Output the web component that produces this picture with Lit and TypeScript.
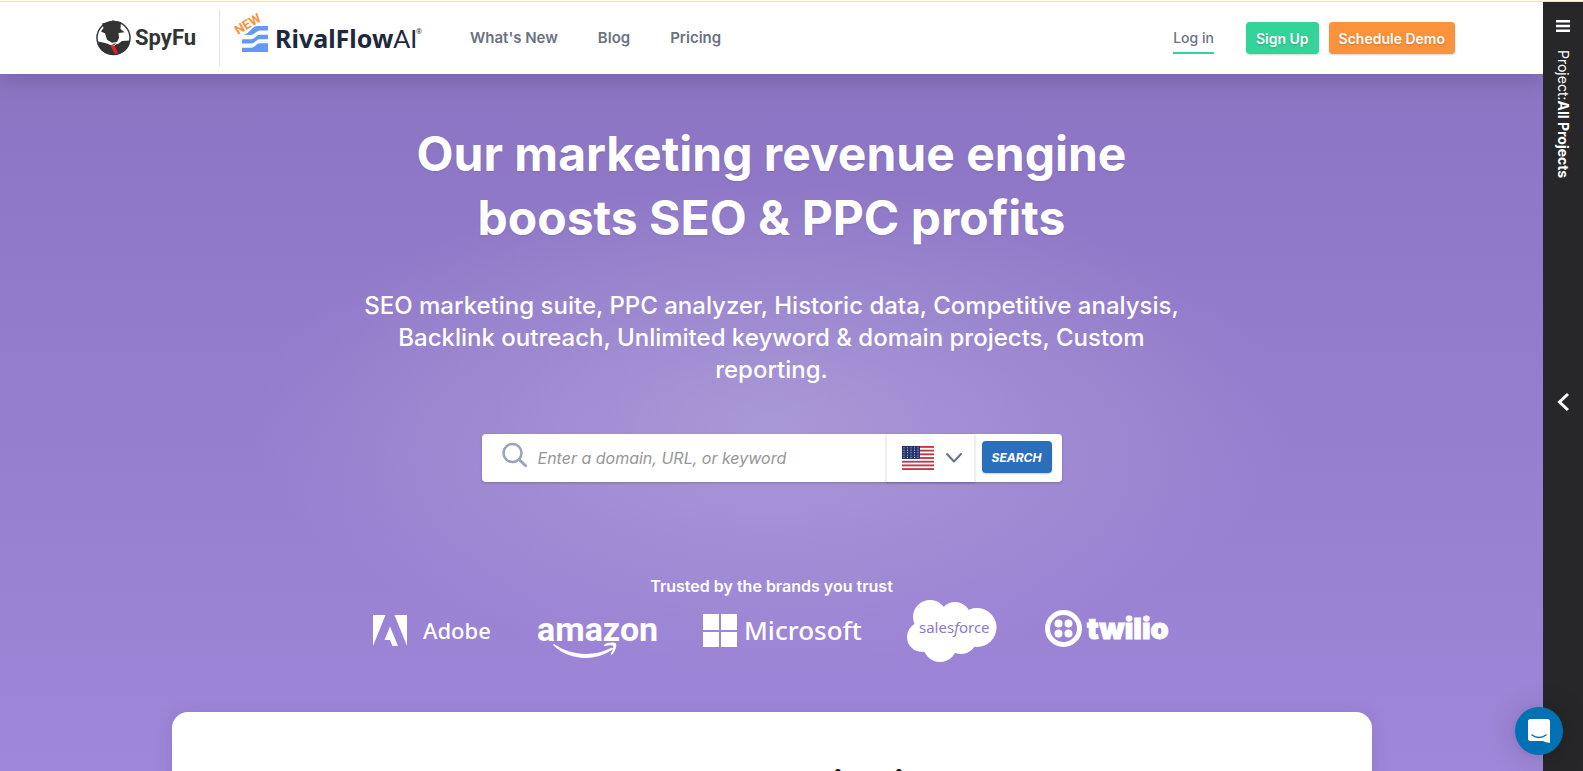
import { LitElement, html, css, svg } from "lit";
import { customElement } from "lit/decorators.js";

@customElement("spyfu-logo")
class SpyfuLogo extends LitElement {
  static styles = css`
    :host { display: block; }
    svg { display: block; }
    text { font: 700 22px Roboto, sans-serif; fill: #333; }
  `;
  render() {
    return html`<svg width="100" height="38" viewBox="0 0 100 38" role="img" aria-label="SpyFu">
      <circle cx="17.500" cy="19" r="16.500" fill="#fff" stroke="#333a45" stroke-width="1.500" />
      <path d="M6 4.500 15 2.500 17 1.200l2 1 6 .8-.5 7 4 3.200-6 .8.500 5-2 4-5 .8-5-3-2-6.500-2.500-1L5 12.500 7.500 9z" fill="#333" />
      <path d="M2 22.500 9 24l5 1.500 5-1 3 .5 4-3 7.500-.5C33.500 30 26 35.500 17.500 35.500S2.500 31 2 22.500z" fill="#333" />
      <path d="M12 24.500l6 2 3-2" fill="none" stroke="#fff" stroke-width="1" />
      <path d="M14 26.500h4.500l3.500 7.500-3 1z" fill="#ec1c24" />
      <text x="39" y="26">SpyFu</text>
    </svg>`;
  }
}

@customElement("rivalflow-logo")
class RivalflowLogo extends LitElement {
  static styles = css`
    :host { display: block; }
    svg { display: block; overflow: visible; }
    .name { font: 700 25px "Noto Sans", sans-serif; fill: #1e293b; }
    .ai { font-family: Lato, sans-serif; font-weight: 400; }
    .mark { font: 400 7px "Noto Sans", sans-serif; fill: #1e293b; }
    .new { font: 700 13px Roboto, sans-serif; fill: #fb923c; }
  `;
  render() {
    return html`<svg width="192" height="44" viewBox="0 0 192 44" role="img" aria-label="New: RivalFlow AI">
      <g fill="#6299f6">
        <path d="M28 10h10v4.500h-8c-4 0-5 4.500-10 4.500h-7c7-1 8-9 15-9z" />
        <path d="M12 23.300h9c4 0 5-4.500 9-4.500h8v4.500h-8c-4 0-5 4.200-9 4.200h-9z" />
        <path d="M12 31.700h9c4 0 5-4.500 9-4.500h8V36H12z" />
      </g>
      <text class="new" transform="translate(8 19) rotate(-31)">NEW</text>
      <text class="name" x="45" y="32">RivalFlow<tspan class="ai">AI</tspan></text>
      <text class="mark" x="186" y="18">®</text>
    </svg>`;
  }
}

@customElement("brand-logos")
class BrandLogos extends LitElement {
  static styles = css`
    :host { display: block; }
    .row { display: flex; flex-wrap: wrap; align-items: center; justify-content: center; gap: 0 48px; margin: 0; padding: 0; list-style: none; }
    svg { display: block; fill: #fff; overflow: visible; }
    .adobe { font: 500 22px "Noto Sans", sans-serif; }
    .amazon { font: 700 34px Roboto, sans-serif; }
    .microsoft { font: 500 26px "Noto Sans", sans-serif; }
    .sales { font: 400 15px "Noto Sans", sans-serif; fill: #9078cc; }
    .slant { font-style: italic; }
    .twilio { font: 900 29px Inter, sans-serif; stroke: #fff; }
  `;
  render() {
    return html`<ul class="row">
      <li><svg width="117" height="62" role="img" aria-label="Adobe">
        <path d="M0 15h12.500L0 46zM21.500 15H34v31zM17 26.500 25 46h-5.500l-2.500-6h-5.500z" />
        <text class="adobe" x="50" y="39">Adobe</text>
      </svg></li>
      <li><svg width="117" height="62" role="img" aria-label="Amazon">
        <text class="amazon" x="-1" y="41">amazon</text>
        <path d="M16 44c17 12 40 13 57 4 2-1 3 1 1 2-18 12-43 10-58-4-1-1-1-2 0-2z" />
        <path d="M66 45c4-3 10-3 12-1.500 1 2-.5 8-4 11-1 .5-1.500 0-1-1 1-2 3-6 2-7.500s-6-.5-8 0c-1 0-1.500-.5-1-1z" />
      </svg></li>
      <li><svg width="156" height="62" role="img" aria-label="Microsoft">
        <path d="M0 14h16v16H0zM18 14h16v16H18zM0 32h16v15H0zM18 32h16v15H18z" />
        <text class="microsoft" x="41" y="40">Microsoft</text>
      </svg></li>
      <li><svg width="90" height="62" role="img" aria-label="Salesforce">
        <circle cx="23" cy="17" r="17" /><circle cx="48" cy="18" r="16" />
        <circle cx="70" cy="27.500" r="19.500" /><circle cx="15" cy="37" r="15" />
        <circle cx="33" cy="45" r="17" /><circle cx="54" cy="38" r="16" />
        <text class="sales" x="12" y="33">sales<tspan class="slant">f</tspan>orce</text>
      </svg></li>
      <li><svg width="125" height="62" role="img" aria-label="Twilio">
        <circle cx="18.500" cy="28.500" r="16" fill="none" stroke="#fff" stroke-width="5" />
        <circle cx="13.500" cy="23.500" r="4" /><circle cx="23.500" cy="23.500" r="4" />
        <circle cx="13.500" cy="33.500" r="4" /><circle cx="23.500" cy="33.500" r="4" />
        <text class="twilio" x="42" y="39">twilio</text>
      </svg></li>
    </ul>`;
  }
}

@customElement("us-flag")
class UsFlag extends LitElement {
  static styles = css`
    :host { display: block; }
    svg { display: block; }
  `;
  render() {
    const stripes = [0, 1, 2, 3, 4, 5, 6];
    const rows = [0, 1, 2, 3, 4];
    return html`<svg width="32" height="24" viewBox="0 0 32 24" aria-hidden="true">
      <rect width="32" height="24" fill="#fff" />
      ${stripes.map((i) => svg`<rect y=${(i * 48) / 13} width="32" height="1.850" fill="#bf3a45" />`)}
      <rect width="18" height="13" fill="#24346b" />
      ${rows.map((r) => rows.map((c) => svg`<circle cx=${2 + c * 3.5} cy=${1.8 + r * 2.4} r=".6" fill="#c3c9dd" />`))}
    </svg>`;
  }
}

@customElement("app-root")
class AppRoot extends LitElement {
  static styles = css`
    :host { display: block; font-family: Inter, sans-serif; }
    * { box-sizing: border-box; }
    a { color: inherit; text-decoration: none; }
    button { font: inherit; border: 0; cursor: pointer; }
    .page { height: 100vh; overflow: hidden; display: grid; grid-template-columns: minmax(0, 1fr) 40px; grid-template-rows: 2px minmax(0, 1fr); position: relative; }
    .notice { grid-column: 1 / -1; background: #fffbeb; border-bottom: 1px solid #eee0cb; }
    .main { display: flex; flex-direction: column; overflow: hidden; }
    .header { background: #fff; height: 72px; flex: none; display: flex; align-items: center; padding: 0 88px 0 96px; box-shadow: 0 4px 24px rgba(0, 0, 0, .18); z-index: 1; }
    .rival { border-left: 1px solid #e2e4e8; padding: 0 0 0 10px; margin-left: 23px; height: 56px; display: flex; align-items: center; }
    .nav { display: flex; gap: 40px; margin-left: 48px; flex: 1; color: #6b7280; font-size: 15px; line-height: 20px; font-weight: 600; }
    .actions { display: flex; align-items: center; font-size: 14px; }
    .login { color: #6b7280; font-weight: 500; line-height: 28px; border-bottom: 2px solid #34d399; margin: 2px 32px 0 0; }
    .btn { height: 32px; padding: 0 10px; border-radius: 4px; color: #fff; font-weight: 600; text-shadow: 0 1px 2px rgba(0, 0, 0, .2); box-shadow: 0 1px 2px rgba(0, 0, 0, .18); }
    .green { background: #34d399; }
    .orange { background: #fb923c; margin-left: 10px; }
    .hero { flex: 1; display: flex; flex-direction: column; align-items: center; color: #fff; text-align: center; padding-top: 48px;
      background: radial-gradient(ellipse 520px 240px at 50% 350px, rgba(186, 174, 222, .55), rgba(186, 174, 222, 0)), linear-gradient(#8b75c3, #a088da); }
    h1 { margin: 0; font-size: 48px; line-height: 64px; font-weight: 700; width: 720px; max-width: 100%; text-shadow: 0 1px 2px rgba(0, 0, 0, .1); }
    .lead { margin: 40px 0 0; font-size: 24px; line-height: 32px; font-weight: 500; width: 832px; max-width: 100%; }
    .search { margin-top: 48px; width: 580px; max-width: 100%; height: 48px; background: #fff; border-radius: 4px; display: flex; align-items: center; box-shadow: 0 1px 3px rgba(0, 0, 0, .2); padding-right: 10px; }
    .glass { margin: 0 10px 6px 20px; flex: none; }
    .query { flex: 1; min-width: 0; border: 0; outline: 0; background: none; padding: 0; font: italic 400 16px/24px Inter, sans-serif; color: #333; }
    .query::placeholder { color: #969696; opacity: 1; }
    .country { height: 48px; width: 89px; padding: 0 12px 0 15px; background: #fff; border-left: 1px solid #f1f1f1; border-right: 1px solid #f1f1f1; box-shadow: 0 1px 2px rgba(0, 0, 0, .2); display: flex; align-items: center; justify-content: space-between; margin-right: 7px; }
    .go { width: 70px; height: 32px; padding: 0; margin-bottom: 2px; border-radius: 4px; background: #2b6fba; color: #fff; font-size: 12px; font-style: italic; font-weight: 700; box-shadow: 0 1px 2px rgba(0, 0, 0, .2); }
    .trusted { margin: 92px 0 2px; font-size: 16px; line-height: 24px; font-weight: 600; }
    .card { flex: 1 0 auto; margin-top: 50px; width: 1200px; max-width: 100%; background: #fff; border-radius: 16px 16px 0 0; box-shadow: 0 4px 20px rgba(60, 40, 120, .15); color: #18181b; padding-top: 50px; }
    h2 { margin: 0; font-size: 36px; line-height: 44px; font-weight: 700; }
    .side { background: #27272a; color: #fff; display: flex; flex-direction: column; align-items: center; padding-top: 18px; position: relative; }
    .icon { background: none; padding: 0; display: block; color: #fff; }
    .icon svg { display: block; }
    .project { writing-mode: vertical-rl; font-size: 14px; line-height: 20px; margin-top: 18px; }
    .collapse { position: absolute; top: 50%; transform: translateY(5px); }
    .chat { position: absolute; right: 20px; bottom: 16px; width: 48px; height: 48px; border-radius: 50%; background: #0071b2; padding: 0; display: grid; place-items: center; box-shadow: 0 1px 6px rgba(0, 0, 0, .06), 0 2px 32px rgba(0, 0, 0, .16); z-index: 2; }
  `;
  render() {
    return html`<div class="page">
      <div class="notice"></div>
      <div class="main">
        <header class="header">
          <a href="#"><spyfu-logo></spyfu-logo></a>
          <a class="rival" href="#"><rivalflow-logo></rivalflow-logo></a>
          <nav class="nav"><a href="#">What's New</a><a href="#">Blog</a><a href="#">Pricing</a></nav>
          <div class="actions">
            <a class="login" href="#">Log in</a>
            <button class="btn green">Sign Up</button>
            <button class="btn orange">Schedule Demo</button>
          </div>
        </header>
        <main class="hero">
          <h1>Our marketing revenue engine boosts SEO &amp; PPC profits</h1>
          <p class="lead">SEO marketing suite, PPC analyzer, Historic data, Competitive analysis, Backlink outreach, Unlimited keyword &amp; domain projects, Custom reporting.</p>
          <form class="search" role="search" @submit=${(e: Event) => e.preventDefault()}>
            <svg class="glass" width="26" height="26" viewBox="0 0 26 26" fill="none" stroke="#98a2b8" stroke-width="2.500" aria-hidden="true">
              <circle cx="10.500" cy="11" r="9" /><path d="M17 17.500 24.500 24.500" stroke-width="3" />
            </svg>
            <input class="query" type="text" aria-label="Domain, URL, or keyword" placeholder="Enter a domain, URL, or keyword" />
            <button class="country" type="button" aria-label="Country: United States">
              <us-flag></us-flag>
              <svg width="16" height="10" viewBox="0 0 16 10" fill="none" stroke="#64748b" stroke-width="2" stroke-linecap="round" stroke-linejoin="round" aria-hidden="true"><path d="M1 1l7 7.500L15 1" /></svg>
            </button>
            <button class="go">SEARCH</button>
          </form>
          <p class="trusted">Trusted by the brands you trust</p>
          <brand-logos></brand-logos>
          <section class="card"><h2>See your organic views</h2></section>
        </main>
      </div>
      <aside class="side">
        <button class="icon" aria-label="Menu"><svg width="14" height="12" viewBox="0 0 14 12" fill="currentColor"><path d="M0 0h14v2.500H0zM0 4.750h14v2.500H0zM0 9.500h14V12H0z" /></svg></button>
        <div class="project">Project:<b>All Projects</b></div>
        <button class="icon collapse" aria-label="Expand projects"><svg width="12" height="20" viewBox="0 0 12 20" fill="none" stroke="currentColor" stroke-width="3"><path d="M11 2 2.500 10l8.500 8" /></svg></button>
      </aside>
      <button class="chat" aria-label="Open chat">
        <svg width="22" height="24" viewBox="0 0 22 24" aria-hidden="true"><path d="M2.500 0h17A2.500 2.500 0 0 1 22 2.500V24c-3-.5-5-1-7-2H2.500A2.500 2.500 0 0 1 0 19.500v-17A2.500 2.500 0 0 1 2.500 0z" fill="#fff" /><path d="M4 16c4 3.300 10 3.300 14 0" fill="none" stroke="#0071b2" stroke-width="1.500" stroke-linecap="round" /></svg>
      </button>
    </div>`;
  }
}
